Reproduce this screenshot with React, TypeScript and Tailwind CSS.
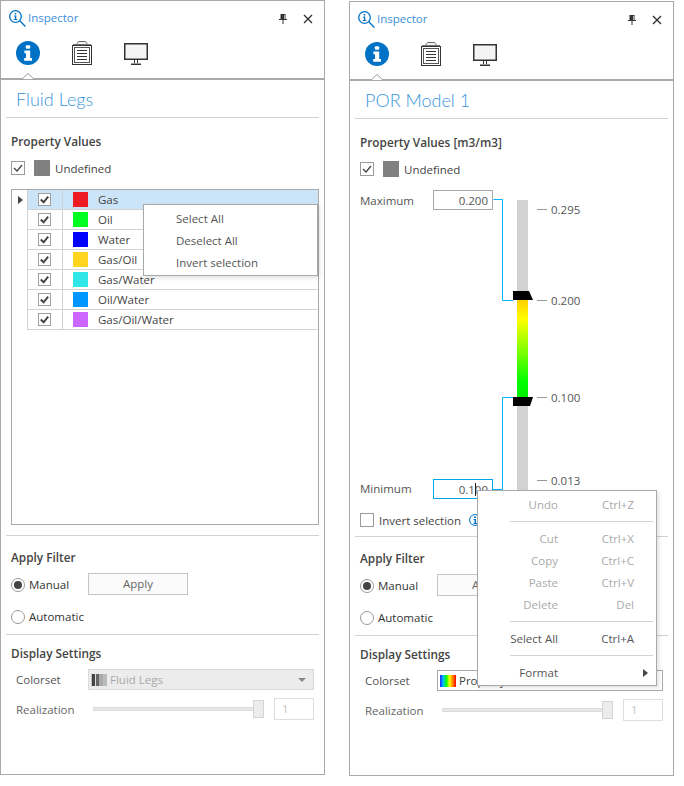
import React from "react";

const LEGS: [string, string][] = [
  ["Gas", "bg-[#ed1c24]"],
  ["Oil", "bg-[#00ff21]"],
  ["Water", "bg-[#0000ff]"],
  ["Gas/Oil", "bg-[#ffd520]"],
  ["Gas/Water", "bg-[#30e6e6]"],
  ["Oil/Water", "bg-[#0096ff]"],
  ["Gas/Oil/Water", "bg-[#cc66ff]"],
];

function Check({ size = 14, strong = false }: { size?: number; strong?: boolean }) {
  return (
    <svg width={size} height={size} viewBox="0 0 14 14" className="block shrink-0">
      <rect x="0.5" y="0.5" width="13" height="13" fill="#fff" stroke="#9a9a9a" />
      <path d="M3 7 L6 10 L11 4" fill="none" stroke="#444" strokeWidth={strong ? 2.2 : 1.3} />
    </svg>
  );
}

function Radio({ on = false }: { on?: boolean }) {
  return (
    <svg width="14" height="14" viewBox="0 0 14 14" className="block shrink-0">
      <circle cx="7" cy="7" r="6.5" fill="#fff" stroke="#9a9a9a" />
      {on && <circle cx="7" cy="7" r="4" fill="#444" />}
    </svg>
  );
}

function InfoGlass() {
  return (
    <svg width="17" height="17" viewBox="0 0 17 17" className="block">
      <circle cx="6.5" cy="6.5" r="5.8" fill="none" stroke="#0072c6" strokeWidth="1.3" />
      <rect x="5.7" y="3" width="1.6" height="1.5" fill="#0072c6" />
      <path d="M5 5.5 H7.3 V9 H8.3 V10 H4.8 V9 H5.9 V6.5 H5 Z" fill="#0072c6" />
      <path d="M10.8 10.8 L16.4 16.4" stroke="#0072c6" strokeWidth="1.4" />
    </svg>
  );
}

function InfoTab() {
  return (
    <svg width="24" height="24" viewBox="0 0 24 24" className="block">
      <circle cx="12" cy="12" r="12" fill="#0072c6" />
      <rect x="9.8" y="4.2" width="4.4" height="3.6" rx="1" fill="#fff" />
      <path d="M8.4 9.6 H14.2 V17 H16 V19.8 H8.2 V17 H10 V12.2 H8.4 Z" fill="#fff" />
    </svg>
  );
}

function NotesTab() {
  return (
    <svg width="20" height="24" viewBox="0 0 20 24" className="block">
      <path d="M4.5 4.5 C5 1.5 6 0.5 7 0.5 H13 C14 0.5 15 1.5 15.5 4.5" fill="#f2f2f2" stroke="#666" />
      <path d="M1 3.5 H19" stroke="#777" />
      <rect x="0.5" y="4.5" width="19" height="19" fill="#fff" stroke="#333" />
      <rect x="2.5" y="6.5" width="15" height="15" fill="#fff" stroke="#555" />
      <path d="M5 9.5 H15 M5 12.5 H15 M5 15.5 H15 M5 18.5 H15" stroke="#333" />
    </svg>
  );
}

function MonitorTab() {
  return (
    <svg width="24" height="22" viewBox="0 0 24 22" className="mt-[2px] block">
      <rect x="0.75" y="0.75" width="22.5" height="15.5" fill="#f4f4f4" stroke="#333" strokeWidth="1.5" />
      <path d="M10.5 16.5 V20 M13.5 16.5 V20" stroke="#333" />
      <path d="M7 21.25 H17" stroke="#333" strokeWidth="1.5" />
    </svg>
  );
}

function Pin() {
  return (
    <svg width="8" height="10" viewBox="0 0 8 10" className="block">
      <path d="M1.5 0 H6.5 V5 H8 V6 H4.5 V10 H3.5 V6 H0 V5 H1.5 Z" fill="#333" />
      <rect x="5" y="1" width="1" height="4" fill="#aaa" />
    </svg>
  );
}

function Close() {
  return (
    <svg width="10" height="10" viewBox="0 0 10 10" className="block">
      <path d="M1 1 L9 9 M9 1 L1 9" stroke="#333" strokeWidth="1.4" />
    </svg>
  );
}

function Panel({
  title,
  className,
  middle,
  swatch,
  dropdown,
  overlay,
  disabled,
}: {
  title: string;
  className?: string;
  middle: React.ReactNode;
  swatch: React.ReactNode;
  dropdown: React.ReactNode;
  overlay?: React.ReactNode;
  disabled?: boolean;
}) {
  return (
    <div className={`relative box-border h-[775px] w-[325px] shrink-0 border border-[#a9a9a9] bg-white ${className ?? ""}`}>
      <div className="flex h-[35px] items-center pl-[8px] pr-[11px]">
        <InfoGlass />
        <span className="ml-[2px] pb-[2px] text-[11.5px] text-[#3b8fd6]">Inspector</span>
        <span className="ml-auto mr-[16px]"><Pin /></span>
        <Close />
      </div>
      <div className="flex h-[42px] items-start gap-8 pl-[15px] pt-[5px]">
        <InfoTab />
        <NotesTab />
        <MonitorTab />
      </div>
      <div className="relative h-[2px] bg-[#a9a9a9]">
        <svg width="12" height="6" viewBox="0 0 12 6" className="absolute left-[21px] top-[-5px]">
          <path d="M0 6 L6 0.5 L12 6 Z" fill="#fff" />
          <path d="M0 6 L6 0.5 L12 6" fill="none" stroke="#999" />
        </svg>
      </div>
      <div className="mx-[5px] box-border h-[38px] border-b border-[#d2d2d2] pl-[10px] pt-[6px] font-['Lato',sans-serif] text-[18px] font-light leading-[27px] text-[#3b96de]">
        {title}
      </div>
      <div className="mx-[5px] box-border h-[418px] border-b border-[#d2d2d2] pl-[5px] pt-[14px]">
        {middle}
      </div>
      <div className="mx-[5px] box-border h-[99px] border-b border-[#d2d2d2] px-[5px] pt-[12px]">
        <div className="h-[20px] text-[11.8px] font-semibold leading-[18px] text-[#444]">Apply Filter</div>
        <div className="mt-[5px] flex h-[22px] items-center">
          <div className="flex h-[22px] w-[77px] items-center pt-[2px]">
            <Radio on />
            <span className="ml-[4px] text-[11.5px] text-[#333]">Manual</span>
          </div>
          <div className="box-border flex h-[22px] w-[100px] items-center justify-center border border-[#c4c4c4] bg-[#fbfbfb] text-[11.5px] text-[#666]">
            Apply
          </div>
        </div>
        <div className="mt-[12px] flex h-[20px] items-center">
          <Radio />
          <span className="ml-[4px] text-[11.5px] text-[#333]">Automatic</span>
        </div>
      </div>
      <div className="px-[10px] pt-[9px]">
        <div className="h-[20px] text-[11.8px] font-semibold leading-[18px] text-[#444]">Display Settings</div>
        <div className="mt-[5px] flex h-[21px] items-center">
          <span className="w-[77px] pl-[5px] text-[11.5px] text-[#555]">Colorset</span>
          <div
            className={`box-border flex h-[21px] w-[226px] items-center border pl-[2px] text-[11.5px] ${
              disabled ? "border-[#d9d9d9] bg-[#ececec] text-[#aaa]" : "border-[#a9a9a9] bg-white text-[#444]"
            }`}
          >
            {swatch}
            <span className="ml-[3px]">{dropdown}</span>
            <svg width="8" height="4" viewBox="0 0 8 4" className="ml-auto mr-[7px]">
              <path d="M0 0 H8 L4 4 Z" fill="#888" />
            </svg>
          </div>
        </div>
        <div className="mt-[8px] flex h-[22px] items-center">
          <span className="w-[82px] pl-[5px] pt-[2px] text-[11.5px] text-[#666]">Realization</span>
          <div className="relative h-[18px] w-[171px]">
            <div className="absolute left-0 top-[7px] h-[4px] w-[165px] border border-[#d8dcdc] bg-[#e6e8e8]" />
            <div className="absolute left-[160px] top-0 h-[18px] w-[11px] border border-[#d4d4d4] bg-[#ececec]" />
          </div>
          <div className="ml-[10px] box-border flex h-[22px] w-[40px] items-center border border-[#dedede] pl-[7px] text-[11.5px] text-[#c4c4c4]">
            1
          </div>
        </div>
      </div>
      {overlay}
    </div>
  );
}

function UndefinedRow() {
  return (
    <div className="mt-[8px] flex h-[16px] items-center">
      <Check />
      <div className="ml-[9px] h-[16px] w-[16px] bg-[#808080]" />
      <span className="ml-[5px] pt-[1px] text-[11.5px] text-[#444]">Undefined</span>
    </div>
  );
}

function LegsMiddle() {
  return (
    <>
      <div className="h-[20px] text-[11.8px] font-semibold leading-[18px] text-[#444]">Property Values</div>
      <UndefinedRow />
      <div className="relative mt-[13px] box-border h-[336px] border border-[#a9a9a9] pl-[15px]">
        <svg width="5" height="8" viewBox="0 0 5 8" className="absolute left-[6px] top-[6px]">
          <path d="M0 0 L5 4 L0 8 Z" fill="#444" />
        </svg>
        {LEGS.map(([name, color], i) => (
          <div
            key={name}
            className={`box-border flex h-[20px] items-center border-b border-l border-[#d2d2d2] ${i === 0 ? "bg-[#cce4f7]" : "bg-white"}`}
          >
            <div className="box-border flex h-full w-[35px] items-center border-r border-[#d2d2d2] pl-[10px]">
              <Check size={13} strong />
            </div>
            <div className={`ml-[10px] h-[15px] w-[15px] ${color}`} />
            <span className="ml-[10px] text-[11.5px] text-[#444]">{name}</span>
          </div>
        ))}
        <div className="absolute left-[131px] top-[14px] box-border h-[72px] w-[175px] border border-[#a9a9a9] bg-white pt-[3px] shadow-[2px_2px_4px_rgba(0,0,0,0.12)]">
          {["Select All", "Deselect All", "Invert selection"].map((t) => (
            <div key={t} className="flex h-[22px] items-center pl-[32px] text-[11.5px] text-[#555]">
              {t}
            </div>
          ))}
        </div>
      </div>
    </>
  );
}

function PorMiddle() {
  const ticks: [number, string][] = [
    [24, "0.295"],
    [115, "0.200"],
    [212, "0.100"],
    [295, "0.013"],
  ];
  return (
    <>
      <div className="h-[20px] text-[11.8px] font-semibold leading-[18px] text-[#444]">Property Values [m3/m3]</div>
      <UndefinedRow />
      <div className="relative mt-[8px] h-[320px]">
        <svg width="200" height="320" viewBox="0 0 200 320" className="absolute left-0 top-0">
          <defs>
            <linearGradient id="por" x1="0" y1="0" x2="0" y2="1">
              <stop offset="0" stopColor="#ffd000" />
              <stop offset="0.2" stopColor="#ffff00" />
              <stop offset="0.85" stopColor="#00ff00" />
              <stop offset="1" stopColor="#00f000" />
            </linearGradient>
          </defs>
          <rect x="157" y="15" width="11" height="300" fill="#d2d2d2" />
          <rect x="157" y="115" width="11" height="97" fill="url(#por)" />
          <path d="M133.5 14.5 H142.5 V115.5 H153" fill="none" stroke="#00b4ff" />
          <path d="M153 212.5 H142.5 V304.5 H133" fill="none" stroke="#00b4ff" />
          <path d="M153 106 H169 L173 115 H153 Z" fill="#000" />
          <path d="M153 212 H173 L170 221 H153 Z" fill="#000" />
          {ticks.map(([y]) => (
            <rect key={y} x="177" y={y} width="10" height="1" fill="#999" />
          ))}
        </svg>
        {ticks.map(([y, t]) => (
          <span key={t} className="absolute left-[191px] text-[11.5px] leading-[16px] text-[#555]" style={{ top: y - 7 }}>
            {t}
          </span>
        ))}
        <span className="absolute left-0 top-[8px] text-[11.5px] leading-[16px] text-[#555]">Maximum</span>
        <div className="absolute left-[73px] top-[5px] box-border flex h-[20px] w-[60px] items-center justify-end border border-[#a9a9a9] pr-[4px] pt-[1px] text-[11.5px] text-[#555]">
          0.200
        </div>
        <span className="absolute left-0 top-[296px] text-[11.5px] leading-[16px] text-[#555]">Minimum</span>
        <div className="absolute left-[73px] top-[294px] box-border flex h-[20px] w-[60px] items-center justify-end border border-[#00a5e8] bg-white pr-[4px] pt-[1px] text-[11.5px] text-[#555]">
          0.100
          <div className="absolute left-[41px] top-[3px] h-[13px] w-px bg-[#222]" />
        </div>
      </div>
      <div className="mt-[8px] flex h-[14px] items-center">
        <svg width="14" height="14" viewBox="0 0 14 14" className="block shrink-0">
          <rect x="0.5" y="0.5" width="13" height="13" fill="#fff" stroke="#9a9a9a" />
        </svg>
        <span className="ml-[5px] pt-[2px] text-[11.5px] text-[#444]">Invert selection</span>
        <svg width="12" height="12" viewBox="0 0 12 12" className="ml-[8px] block">
          <circle cx="6" cy="6" r="5.4" fill="#fff" stroke="#0072c6" />
          <path d="M5 2.5 H7 V4 H5 Z M4.5 5 H7 V9 H8 V10 H4.5 V9 H5.5 V6 H4.5 Z" fill="#0072c6" />
        </svg>
      </div>
    </>
  );
}

function PorMenu() {
  const Sep = () => <div className="mb-[6px] ml-[32px] mr-[3px] mt-[5px] h-px bg-[#d2d2d2]" />;
  const Item = ({ label, keys, off = true }: { label: string; keys: string; off?: boolean }) => (
    <div className={`flex h-[22px] items-center text-[11.5px] ${off ? "text-[#aaa]" : "text-[#555]"}`}>
      <span className="w-[80px] text-right">{label}</span>
      <span className="w-[76px] text-right">{keys}</span>
    </div>
  );
  return (
    <div className="absolute left-[127px] top-[488px] box-border h-[196px] w-[180px] border border-[#a9a9a9] bg-white pt-[3px] shadow-[2px_2px_4px_rgba(0,0,0,0.12)]">
      <Item label="Undo" keys="Ctrl+Z" />
      <Sep />
      <Item label="Cut" keys="Ctrl+X" />
      <Item label="Copy" keys="Ctrl+C" />
      <Item label="Paste" keys="Ctrl+V" />
      <Item label="Delete" keys="Del" />
      <Sep />
      <Item label="Select All" keys="Ctrl+A" off={false} />
      <Sep />
      <div className="flex h-[22px] items-center text-[11.5px] text-[#555]">
        <span className="w-[80px] text-right">Format</span>
        <svg width="5" height="8" viewBox="0 0 5 8" className="ml-[85px]">
          <path d="M0 0 L5 4 L0 8 Z" fill="#444" />
        </svg>
      </div>
    </div>
  );
}

export default function App() {
  return (
    <div className="flex h-[786px] w-[684px] items-start gap-[24px] overflow-hidden bg-white font-['Open_Sans',sans-serif]">
      <Panel
        title="Fluid Legs"
        middle={<LegsMiddle />}
        disabled
        dropdown="Fluid Legs"
        swatch={
          <div className="flex h-[12px] w-[16px] shrink-0">
            <div className="w-[1px] bg-[#bbb]" />
            <div className="w-[3px] bg-[#444]" />
            <div className="w-[1px] bg-[#ddd]" />
            <div className="w-[3px] bg-[#666]" />
            <div className="w-[4px] bg-[#aaa]" />
            <div className="w-[4px] bg-[#bbb]" />
          </div>
        }
      />
      <Panel
        title="POR Model 1"
        className="mt-[1px]"
        middle={<PorMiddle />}
        dropdown="Property"
        overlay={<PorMenu />}
        swatch={
          <div className="h-[12px] w-[16px] shrink-0 bg-[linear-gradient(90deg,#2020ff,#00c0ff,#00ff00,#ffff00,#ff8000,#ff0000)]" />
        }
      />
    </div>
  );
}
